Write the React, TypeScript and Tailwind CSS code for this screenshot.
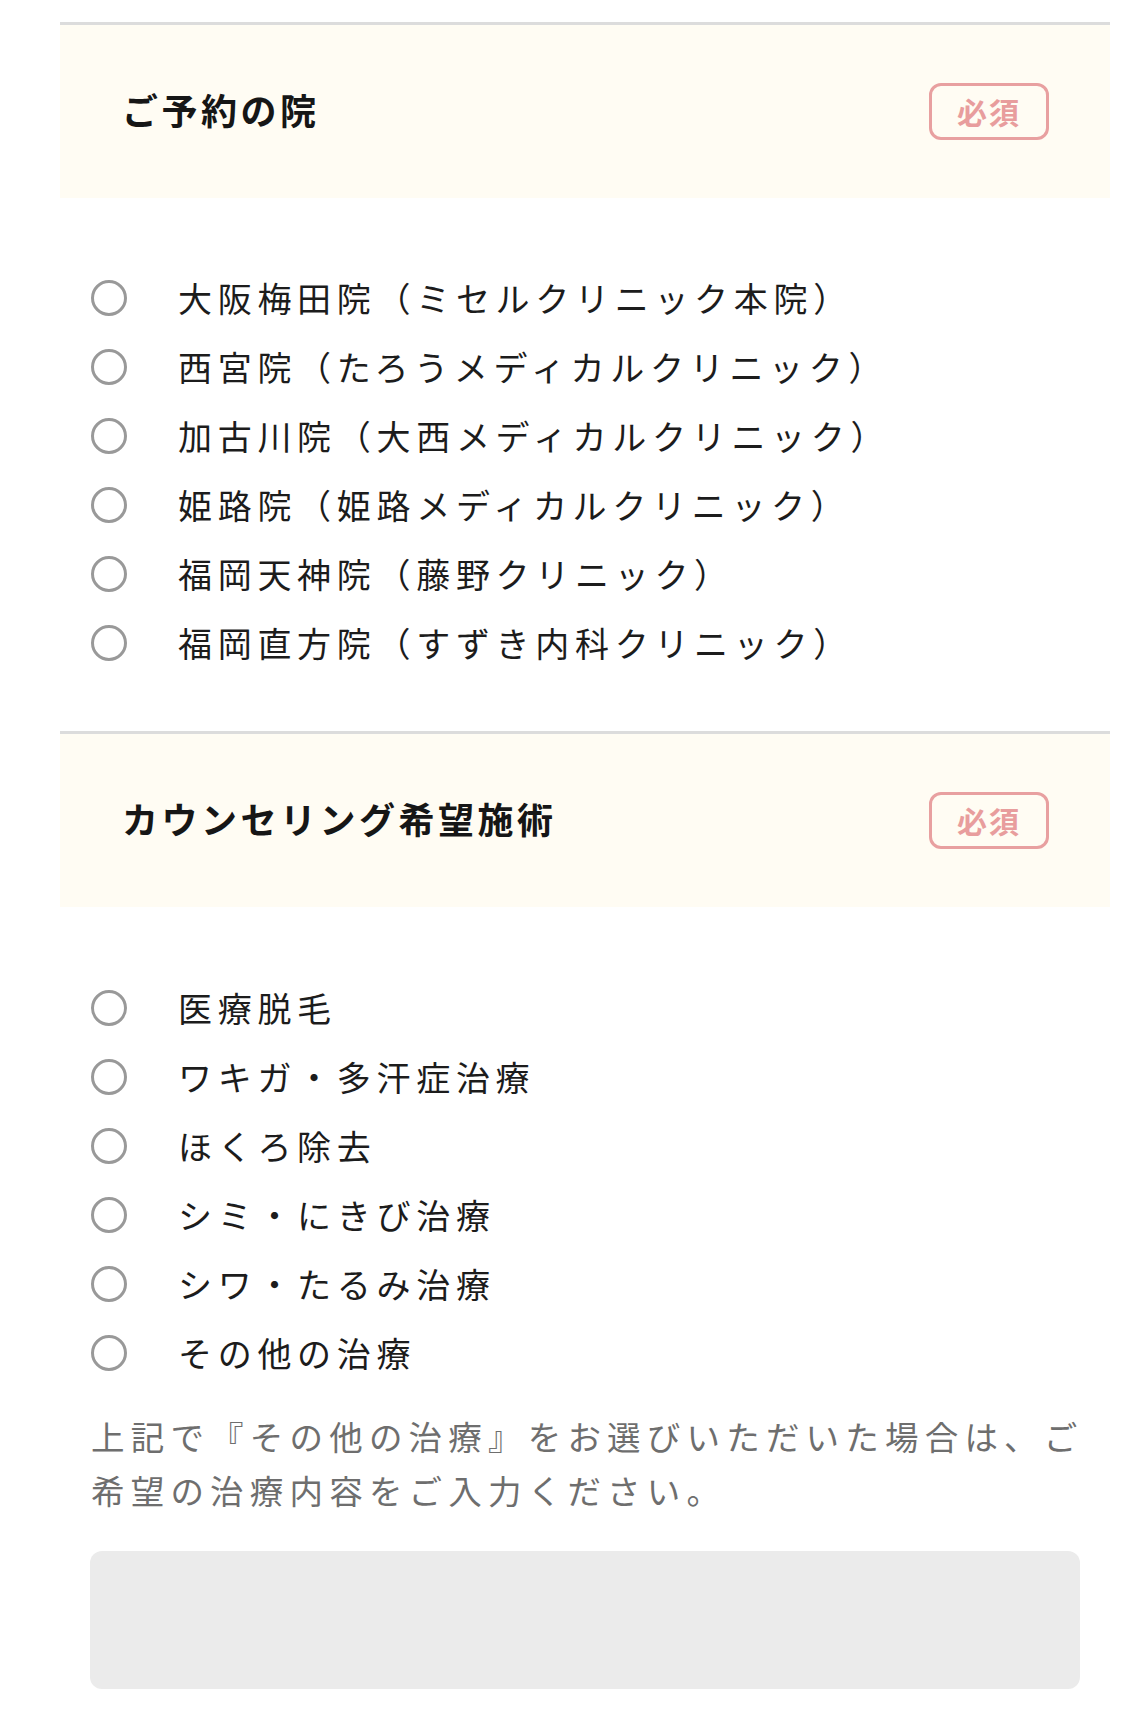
const clinics = [
  "大阪梅田院（ミセルクリニック本院）",
  "西宮院（たろうメディカルクリニック）",
  "加古川院（大西メディカルクリニック）",
  "姫路院（姫路メディカルクリニック）",
  "福岡天神院（藤野クリニック）",
  "福岡直方院（すずき内科クリニック）",
];

const treatments = [
  "医療脱毛",
  "ワキガ・多汗症治療",
  "ほくろ除去",
  "シミ・にきび治療",
  "シワ・たるみ治療",
  "その他の治療",
];

function SectionHeader({ title }: { title: string }) {
  return (
    <div className="h-[176px] border-t-[3px] border-[#dcdcdc] bg-[#fffcf3] flex items-center justify-between pl-[62px] pr-[61px]">
      <h2 className="text-[36px] leading-none font-bold tracking-[3.5px] text-[#161616] -mt-[6px]">{title}</h2>
      <span className="w-[120px] h-[57px] rounded-[12px] border-[3px] border-[#e8a0a0] flex items-center justify-center text-[30px] font-bold tracking-[2px] text-[#e89d9d]">
        必須
      </span>
    </div>
  );
}

function RadioList({ items, name }: { items: string[]; name: string }) {
  return (
    <ul className="pl-[31px]">
      {items.map((item) => (
        <li key={item} className="h-[69px] flex items-center">
          <label className="flex items-center">
            <input type="radio" name={name} className="sr-only" />
            <span className="w-[36px] h-[36px] rounded-full border-[3px] border-[#999999] bg-white" />
            <span className="ml-[51px] text-[34px] tracking-[5.7px] text-[#1c1c1c]">{item}</span>
          </label>
        </li>
      ))}
    </ul>
  );
}

export default function App() {
  return (
    <div
      className="w-[1135px] min-h-[1716px] bg-white pt-[22px]"
      style={{ fontFamily: '"Noto Sans CJK JP", "Noto Sans", sans-serif' }}
    >
      {/* clinic */}
      <section className="ml-[60px] w-[1050px]">
        <SectionHeader title="ご予約の院" />
        <div className="pt-[65px] pb-[54px]">
          <RadioList items={clinics} name="clinic" />
        </div>
      </section>

      {/* treatment */}
      <section className="ml-[60px] w-[1050px]">
        <SectionHeader title="カウンセリング希望施術" />
        <div className="pt-[66px]">
          <RadioList items={treatments} name="treatment" />
        </div>
        <p className="mt-[22px] ml-[31px] whitespace-nowrap text-[33.5px] leading-[54px] tracking-[6.2px] text-[#6e6e6e]">
          上記で『その他の治療』をお選びいただいた場合は、ご
          <br />
          希望の治療内容をご入力ください。
        </p>
        <textarea className="block mt-[34px] ml-[30px] w-[990px] h-[138px] rounded-[12px] bg-[#ebebeb] resize-none outline-none" />
      </section>
    </div>
  );
}
